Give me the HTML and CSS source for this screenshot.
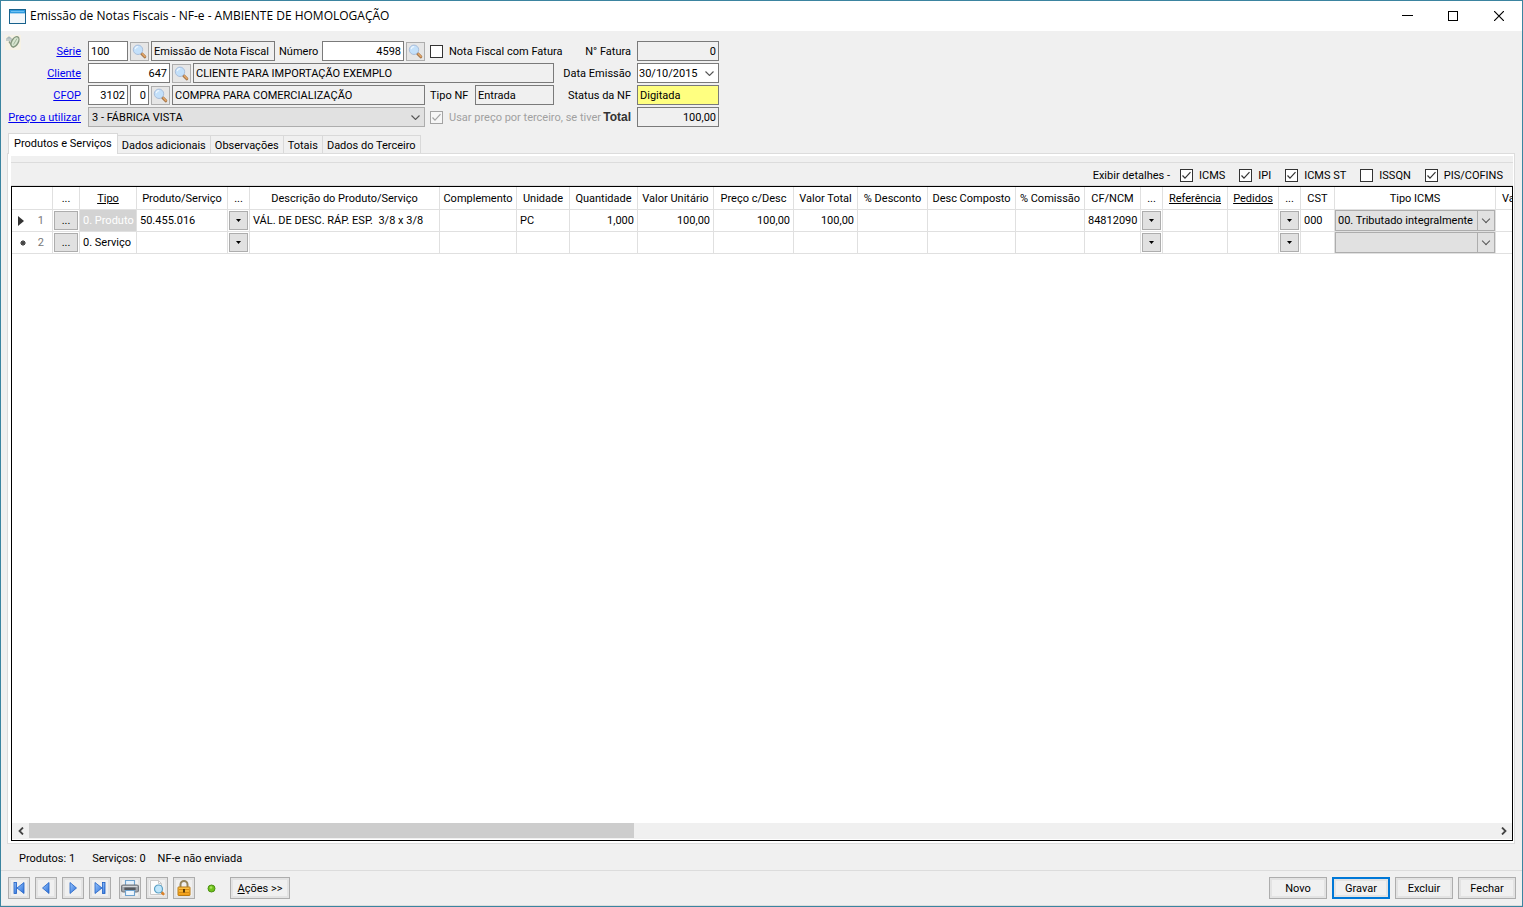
FILE: index.html
```html
<!DOCTYPE html>
<html lang="pt-BR">
<head>
<meta charset="utf-8">
<title>Emissão de Notas Fiscais</title>
<link rel="stylesheet" href="styles.css">
</head>
<body>
<svg class="defs" aria-hidden="true">
  <symbol id="lens" viewBox="0 0 15 15">
    <path d="M9.500 9.500 12.800 12.800" stroke="#9b6f45" stroke-width="3" stroke-linecap="round"/>
    <path d="M10.300 9.900 13 12.600" stroke="#e3a566" stroke-width="1.500" stroke-linecap="round"/>
    <circle cx="6" cy="5.800" r="4.700" fill="#c3e0fa" stroke="#a9bedb" stroke-width="1"/>
    <path d="M3.200 5.200a3 3 0 0 1 3-2.500" fill="none" stroke="#eef7ff" stroke-width="1.200"/>
  </symbol>
  <linearGradient id="blue" x1="0" y1="0" x2="1" y2="1"><stop offset="0" stop-color="#9cc8ff"/><stop offset="1" stop-color="#2b6fd8"/></linearGradient>
  <linearGradient id="gold" x1="0" y1="0" x2="0" y2="1"><stop offset="0" stop-color="#ffc94d"/><stop offset="1" stop-color="#ef9a12"/></linearGradient>
</svg>
<div class="window">
  <header class="titlebar">
    <svg class="app-icon" width="17" height="15" viewBox="0 0 17 15">
      <rect x=".5" y=".5" width="16" height="14" fill="#f2f7fa" stroke="#17618c"/>
      <rect x="1" y="1" width="15" height="3" fill="#2d9be0"/>
      <path d="M1 4.500h15" stroke="#a9d3ee"/>
      <path d="M2 2.500h13" stroke="#6cc0f2"/>
    </svg>
    <h1>Emissão de Notas Fiscais - NF-e - AMBIENTE DE HOMOLOGAÇÃO</h1>
    <div class="win-controls">
      <button aria-label="Minimizar"><svg width="12" height="12" viewBox="0 0 12 12"><path d="M1 5.500h11" stroke="#000"/></svg></button>
      <button aria-label="Maximizar"><svg width="10" height="10" viewBox="0 0 10 10"><rect x=".5" y=".5" width="9" height="9" fill="none" stroke="#000"/></svg></button>
      <button aria-label="Fechar janela"><svg width="10" height="10" viewBox="0 0 10 10"><path d="M0 0l10 10M10 0L0 10" stroke="#000" stroke-width="1.200"/></svg></button>
    </div>
  </header>

  <main>
    <svg class="clip" width="16" height="15" viewBox="0 0 16 15">
      <rect width="16" height="15" fill="#f6f2e6"/>
      <path d="M2 6V3.500l2-1.500 2 1.500v3M4 3v3" fill="none" stroke="#a9b7b9" stroke-width="1.300"/>
      <path d="M4 6.500l3 4.500 2 1" fill="none" stroke="#8b9b84" stroke-width="1.400"/>
      <ellipse cx="10" cy="6.800" rx="3.200" ry="5.600" transform="rotate(30 10 6.800)" fill="#d8e6d0" stroke="#84967e" stroke-width="1.400"/>
      <path d="M8.500 9.500l3.500-6" stroke="#a2b59b"/>
    </svg>
    <form class="form">
      <div class="row">
        <a class="label" href="#">Série</a>
        <div class="group">
          <input class="w40" value="100" aria-label="Série">
          <button type="button" class="find" aria-label="Buscar série"><svg><use href="#lens"/></svg></button>
          <input class="w124" value="Emissão de Nota Fiscal Eletrônica" readonly aria-label="Descrição da série">
          <label class="inner" for="numero">Número</label>
          <input class="w82 num" id="numero" value="4598">
          <button type="button" class="find" aria-label="Buscar número"><svg><use href="#lens"/></svg></button>
          <label class="check spaced"><input type="checkbox">Nota Fiscal com Fatura</label>
        </div>
        <label class="side" for="fatura">N° Fatura</label>
        <input class="w82 num" id="fatura" value="0" readonly>
      </div>
      <div class="row">
        <a class="label" href="#">Cliente</a>
        <div class="group">
          <input class="w82 num" value="647" aria-label="Cliente">
          <button type="button" class="find" aria-label="Buscar cliente"><svg><use href="#lens"/></svg></button>
          <input class="w361" value="CLIENTE PARA IMPORTAÇÃO EXEMPLO" readonly aria-label="Nome do cliente">
        </div>
        <label class="side" for="emissao">Data Emissão</label>
        <select class="w82 date" id="emissao"><option>30/10/2015</option></select>
      </div>
      <div class="row">
        <a class="label" href="#">CFOP</a>
        <div class="group">
          <input class="w40 num" value="3102" aria-label="CFOP">
          <input class="w19 num" value="0" aria-label="Sequência do CFOP">
          <button type="button" class="find" aria-label="Buscar CFOP"><svg><use href="#lens"/></svg></button>
          <input class="w253" value="COMPRA PARA COMERCIALIZAÇÃO" readonly aria-label="Descrição do CFOP">
          <label class="inner wide" for="tiponf">Tipo NF</label>
          <input class="w79" id="tiponf" value="Entrada" readonly>
        </div>
        <label class="side" for="status">Status da NF</label>
        <input class="w82 status" id="status" value="Digitada" readonly>
      </div>
      <div class="row">
        <a class="label" href="#">Preço a utilizar</a>
        <div class="group">
          <select class="w337" aria-label="Preço a utilizar"><option>3 - FÁBRICA VISTA</option></select>
          <label class="check spaced off"><input type="checkbox" checked disabled>Usar preço por terceiro, se tiver</label>
        </div>
        <label class="side total" for="total">Total</label>
        <input class="w82 num" id="total" value="100,00" readonly>
      </div>
    </form>

    <nav class="tabs" role="tablist">
      <button role="tab" class="tab active" aria-selected="true">Produtos e Serviços</button>
      <button role="tab" class="tab">Dados adicionais</button>
      <button role="tab" class="tab">Observações</button>
      <button role="tab" class="tab">Totais</button>
      <button role="tab" class="tab">Dados do Terceiro</button>
    </nav>

    <section class="panel">
      <div class="details">
        <span>Exibir detalhes -</span>
        <label class="check"><input type="checkbox" checked>ICMS</label>
        <label class="check"><input type="checkbox" checked>IPI</label>
        <label class="check"><input type="checkbox" checked>ICMS ST</label>
        <label class="check"><input type="checkbox">ISSQN</label>
        <label class="check"><input type="checkbox" checked>PIS/COFINS</label>
      </div>
      <div class="grid">
        <div class="grid-view">
          <table>
            <colgroup>
              <col class="c41"><col class="c27"><col class="c57"><col class="c91"><col class="c22"><col class="c190"><col class="c77"><col class="c53"><col class="c68"><col class="c76"><col class="c80"><col class="c64"><col class="c70"><col class="c88"><col class="c69"><col class="c56"><col class="c22"><col class="c65"><col class="c51"><col class="c22"><col class="c34"><col class="c161"><col class="c80">
            </colgroup>
            <thead>
              <tr>
                <th></th><th>...</th><th><u>Tipo</u></th><th>Produto/Serviço</th><th>...</th><th>Descrição do Produto/Serviço</th><th>Complemento</th><th>Unidade</th><th>Quantidade</th><th>Valor Unitário</th><th>Preço c/Desc</th><th>Valor Total</th><th>% Desconto</th><th>Desc Composto</th><th>% Comissão</th><th>CF/NCM</th><th>...</th><th><u>Referência</u></th><th><u>Pedidos</u></th><th>...</th><th>CST</th><th>Tipo ICMS</th><th class="last">Va</th>
              </tr>
            </thead>
            <tbody>
              <tr>
                <td class="rownum"><div><svg width="6" height="10" viewBox="0 0 6 10"><path d="M0 0l6 5-6 5z" fill="#333"/></svg>1</div></td>
                <td class="ctl"><button>...</button></td>
                <td class="selected">0. Produto</td>
                <td>50.455.016</td>
                <td class="ctl"><button class="drop" aria-label="Abrir"></button></td>
                <td>VÁL. DE DESC. RÁP. ESP.&nbsp; 3/8 x 3/8</td>
                <td></td><td>PC</td>
                <td class="num">1,000</td><td class="num">100,00</td><td class="num">100,00</td><td class="num">100,00</td>
                <td></td><td></td><td></td><td>84812090</td>
                <td class="ctl"><button class="drop" aria-label="Abrir"></button></td>
                <td></td><td></td>
                <td class="ctl"><button class="drop" aria-label="Abrir"></button></td>
                <td>000</td>
                <td class="pick"><select aria-label="Tipo ICMS"><option>00. Tributado integralmente</option></select></td>
                <td></td>
              </tr>
              <tr>
                <td class="rownum"><div><svg class="star" width="6" height="6" viewBox="0 0 6 6"><path d="M3 0v6M0 3h6M1 1l4 4M5 1L1 5" stroke="#444"/><circle cx="3" cy="3" r="2" fill="#444"/></svg>2</div></td>
                <td class="ctl"><button>...</button></td>
                <td>0. Serviço</td>
                <td></td>
                <td class="ctl"><button class="drop" aria-label="Abrir"></button></td>
                <td></td><td></td><td></td><td></td><td></td><td></td><td></td><td></td><td></td><td></td><td></td>
                <td class="ctl"><button class="drop" aria-label="Abrir"></button></td>
                <td></td><td></td>
                <td class="ctl"><button class="drop" aria-label="Abrir"></button></td>
                <td></td>
                <td class="pick"><select aria-label="Tipo ICMS"><option></option></select></td>
                <td></td>
              </tr>
            </tbody>
          </table>
        </div>
        <div class="scrollbar">
          <button aria-label="Rolar à esquerda"><svg width="6" height="8" viewBox="0 0 6 8"><path d="M5 .5L1.500 4 5 7.500" fill="none" stroke="#444" stroke-width="1.800"/></svg></button>
          <div class="track"><div class="thumb"></div></div>
          <button aria-label="Rolar à direita"><svg width="6" height="8" viewBox="0 0 6 8"><path d="M1 .5L4.500 4 1 7.500" fill="none" stroke="#444" stroke-width="1.800"/></svg></button>
        </div>
      </div>
    </section>
    <div class="summary"><span>Produtos: 1</span><span>Serviços: 0</span><span>NF-e não enviada</span></div>
  </main>

  <footer>
    <div class="tools">
      <button aria-label="Primeiro"><svg width="14" height="14" viewBox="0 0 14 14"><g fill="url(#blue)" stroke="#1f5fc4" stroke-width=".8"><rect x="2" y="1.500" width="2.500" height="11"/><path d="M12 1.500v11L5 7z"/></g></svg></button>
      <button aria-label="Anterior"><svg width="14" height="14" viewBox="0 0 14 14"><path d="M10 1.500v11L3.500 7z" fill="url(#blue)" stroke="#1f5fc4" stroke-width=".8"/></svg></button>
      <button aria-label="Próximo"><svg width="14" height="14" viewBox="0 0 14 14"><path d="M4 1.500v11L10.500 7z" fill="url(#blue)" stroke="#1f5fc4" stroke-width=".8"/></svg></button>
      <button aria-label="Último"><svg width="14" height="14" viewBox="0 0 14 14"><g fill="url(#blue)" stroke="#1f5fc4" stroke-width=".8"><rect x="9.500" y="1.500" width="2.500" height="11"/><path d="M2 1.500v11L9 7z"/></g></svg></button>
    </div>
    <div class="tools">
      <button aria-label="Imprimir"><svg width="18" height="16" viewBox="0 0 16 16" preserveAspectRatio="none"><rect x="4" y=".5" width="8" height="6" fill="#e4f1fc" stroke="#6fa3cf"/><rect x=".5" y="5" width="15" height="7" rx="1.500" fill="#a3a7ad" stroke="#73777d"/><path d="M1.500 6.500h13" stroke="#d4d7da"/><rect x="3" y="7.500" width="10" height="2.500" fill="#55595f"/><rect x="4" y="10.500" width="8" height="5" fill="#eef6fd" stroke="#6fa3cf"/></svg></button>
      <button aria-label="Visualizar"><svg width="16" height="16" viewBox="0 0 16 16"><path d="M1.500.5h8l3 3v11h-11z" fill="#fcfcfc" stroke="#c9c9c9"/><path d="M9.500.5v3h3" fill="none" stroke="#c9c9c9"/><path d="M12.800 12.500l1.500 1.500" stroke="#d9822b" stroke-width="2.600" stroke-linecap="round"/><circle cx="9.500" cy="9" r="4" fill="#bfe6fb" stroke="#5ba0c4" stroke-width="1.200"/></svg></button>
      <button aria-label="Bloquear"><svg width="14" height="16" viewBox="0 0 14 16"><path d="M3.500 8V4.500a3.500 3.500 0 0 1 7 0V8" fill="none" stroke="#96855c" stroke-width="2"/><rect x="1" y="7" width="12" height="8.500" rx=".5" fill="url(#gold)" stroke="#b97a14"/><path d="M2 9.500h10M2 12.500h10" stroke="#d78a14"/><path d="M7 9v3.500" stroke="#4b3205" stroke-width="1.800"/></svg></button>
    </div>
    <svg class="led" width="9" height="9" viewBox="0 0 9 9"><circle cx="4.500" cy="4.500" r="3.500" fill="#6fc11c" stroke="#4b8f12"/><circle cx="4" cy="3.500" r="1.300" fill="#a8e35c"/></svg>
    <button class="actions"><u>A</u>ções &gt;&gt;</button>
    <div class="commands">
      <button>Novo</button>
      <button class="primary">Gravar</button>
      <button>Excluir</button>
      <button>Fechar</button>
    </div>
  </footer>
</div>
</body>
</html>
```
FILE: styles.css
```css
* { box-sizing: border-box; }
body { margin: 0; background: #f0f0f0; color: #000; }
body, button, input, select { font: 11px/15px Roboto, "Liberation Sans", sans-serif; }
button, input, select { margin: 0; color: #000; border-radius: 0; }
button { padding: 0; }
.defs { position: absolute; width: 0; height: 0; }
.window { display: flex; flex-direction: column; min-height: 100vh; border: 1px solid #3b84a0; }

.titlebar { display: flex; align-items: center; height: 30px; padding-left: 8px; background: #fff; }
.titlebar h1 { flex: 1; margin: 0 0 0 4px; font: 12px/16px "Open Sans", "Noto Sans", sans-serif; }
.win-controls { display: flex; }
.win-controls button { display: flex; align-items: center; justify-content: center; width: 46px; height: 29px; border: 0; background: none; }

main { position: relative; flex: 1; display: flex; flex-direction: column; padding: 10px 7px 0 6px; }
.clip { position: absolute; left: 4px; top: 4px; }
.form { display: flex; flex-direction: column; gap: 2px; width: 712px; }
.row { display: flex; align-items: center; height: 20px; }
.label { width: 74px; text-align: right; color: #0000f0; white-space: nowrap; }
.group { flex: 1; display: flex; align-items: center; gap: 2px; min-width: 0; margin-left: 7px; }
.inner { width: 43px; padding-left: 2px; white-space: nowrap; }
.inner.wide { width: 46px; padding-left: 3px; }
.side { margin: 0 6px; white-space: nowrap; }
.total { font: bold 12px/14px "Liberation Sans", Arial, sans-serif; color: #333; }

.form input:not([type="checkbox"]), .form select { flex: none; height: 20px; padding: 0 2px; border: 1px solid #7a7a7a; background-color: #fff; outline: 0; }
.form input[readonly]:not(.status) { background-color: #f0f0f0; }
.form input.status { background-color: #ffff80; }
.num { text-align: right; }
select { appearance: none; background: no-repeat right 4px center / 9px 5px url("data:image/svg+xml,%3Csvg xmlns='http://www.w3.org/2000/svg' viewBox='0 0 9 5'%3E%3Cpath d='M.5.5l4 4 4-4' fill='none' stroke='%23555' stroke-width='1.1'/%3E%3C/svg%3E"); }
.form select.w337 { padding: 0 3px; background-color: #e1e1e1; border-color: #adadad; }
.form select.date { padding: 0 1px; }
.w19 { width: 19px; }
.w40 { width: 40px; }
.w79 { width: 79px; }
.w82 { width: 82px; }
.w124 { width: 124px; }
.w253 { width: 253px; }
.w337 { width: 337px; }
.w361 { width: 361px; }
.find { flex: none; display: flex; align-items: center; justify-content: center; width: 19px; height: 19px; border: 1px solid #adadad; background: #e6e6e6; }
.find svg { width: 15px; height: 15px; }

.check { display: flex; align-items: center; gap: 6px; white-space: nowrap; }
.spaced { margin-left: 3px; }
.check input { appearance: none; width: 13px; height: 13px; margin: 0; border: 1px solid #333; background: #fff; }
.check input:checked { background: #fff no-repeat center / 11px 11px url("data:image/svg+xml,%3Csvg xmlns='http://www.w3.org/2000/svg' viewBox='0 0 11 11'%3E%3Cpath d='M1.500 5.500l2.500 2.700 5.500-6' fill='none' stroke='%23333' stroke-width='1.200'/%3E%3C/svg%3E"); }
.off { color: #a0a0a0; }
.off input { opacity: .4; }

.tabs { display: flex; align-items: flex-end; height: 20px; margin: 6px 0 0 1px; }
.tab { height: 18px; padding: 1px 4px 0; border: 1px solid #d9d9d9; border-width: 1px 1px 0 0; background: #f0f0f0; white-space: nowrap; }
.tab.active { position: relative; z-index: 1; height: 21px; margin-bottom: -1px; padding: 0 5px 1px; border-left-width: 1px; background: #fff; }

.panel { flex: 1; display: flex; flex-direction: column; padding: 2px 1px 2px 3px; border: 1px solid #dcdcdc; background: #fff; }
.details { display: flex; align-items: center; justify-content: flex-end; gap: 14px; height: 30px; padding: 8px 10px 0 0; background: #f0f0f0; box-shadow: inset 0 6px #f0f0f0, inset 0 7px #dcdcdc, inset 0 -1px #dcdcdc; }
.details > span { margin-right: -4px; }
.grid { flex: 1; display: flex; flex-direction: column; min-width: 0; border: 1px solid #000; background: #fff; }
.grid-view { flex: 1; overflow: hidden; contain: inline-size; }
table { width: 1564px; table-layout: fixed; border-spacing: 0; }
th, td { height: 22px; padding: 0 3px; border: 1px solid #e0e0e0; border-width: 0 1px 1px 0; font-weight: normal; text-align: left; white-space: nowrap; overflow: hidden; }
th { height: 23px; padding: 0; text-align: center; }
th.last { padding-left: 6px; text-align: left; }
td.num { text-align: right; }
.c22 { width: 22px; }
.c27 { width: 27px; }
.c34 { width: 34px; }
.c41 { width: 41px; }
.c51 { width: 51px; }
.c53 { width: 53px; }
.c56 { width: 56px; }
.c57 { width: 57px; }
.c64 { width: 64px; }
.c65 { width: 65px; }
.c68 { width: 68px; }
.c69 { width: 69px; }
.c70 { width: 70px; }
.c76 { width: 76px; }
.c77 { width: 77px; }
.c80 { width: 80px; }
.c88 { width: 88px; }
.c91 { width: 91px; }
.c161 { width: 161px; }
.c190 { width: 190px; }
.rownum div { display: flex; align-items: center; justify-content: space-between; padding: 0 5px 0 3px; color: #777; }
.star { margin-left: 2px; }
td.selected { background: #d3d3d3; color: #fff; }
td.ctl { padding: 0 1px; }
td.pick { padding: 0; }
.ctl button { display: block; width: 100%; height: 19px; border: 1px solid #adadad; background: #e1e1e1; }
.ctl .drop { background: #e1e1e1 no-repeat center / 5px 3px url("data:image/svg+xml,%3Csvg xmlns='http://www.w3.org/2000/svg' viewBox='0 0 5 3'%3E%3Cpath d='M0 0h5L2.500 3z'/%3E%3C/svg%3E"); }
.pick select { display: block; width: 100%; height: 21px; padding: 0 2px; border: 1px solid #adadad; background-color: #e1e1e1; box-shadow: inset -16px 0 #e1e1e1, inset -17px 0 #adadad; background-image: none; }
.pick { position: relative; }
.pick::after { content: ""; position: absolute; right: 6px; top: 6px; width: 5px; height: 5px; border: solid #555; border-width: 0 1px 1px 0; transform: rotate(45deg); pointer-events: none; }
.scrollbar { display: flex; height: 16px; margin-bottom: 1px; background: #f0f0f0; }
.scrollbar button { display: flex; align-items: center; justify-content: center; width: 17px; border: 0; background: none; }
.track { flex: 1; }
.thumb { width: 41.3%; height: 15px; background: #cdcdcd; }

.summary { display: flex; align-items: center; height: 26px; padding: 2px 0 0 12px; gap: 12px; }
.summary span:first-child { margin-right: 5px; }

footer { display: flex; align-items: center; height: 36px; padding: 0 6px 0 7px; border-top: 1px solid #dcdcdc; border-bottom: 1px solid #dcdcdc; }
footer button { display: flex; align-items: center; justify-content: center; height: 22px; border: 1px solid #adadad; background: #f0f0f0; box-shadow: inset 0 0 0 2px #e3e3e3; }
.tools { display: flex; gap: 5px; margin-right: 8px; }
.tools button { width: 22px; }
.led { margin: 0 14px 0 4px; }
.actions { width: 60px; white-space: pre; }
.commands { display: flex; gap: 5px; margin-left: auto; }
.commands button { width: 58px; }
.commands .primary { border: 2px solid #0078d7; }
```
